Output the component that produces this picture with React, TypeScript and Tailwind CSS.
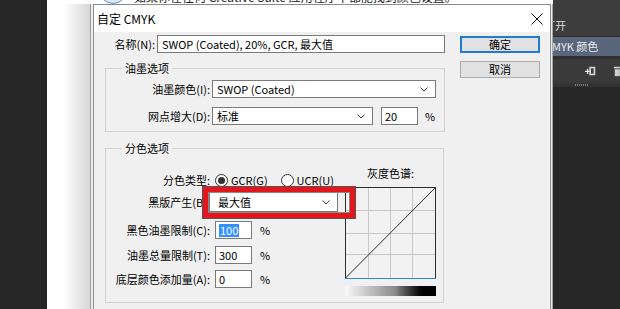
import React from "react";

function Chevron() {
  return (
    <svg width="8" height="5" viewBox="0 0 8 5" className="shrink-0">
      <polyline points="0.5,0.5 4,4 7.5,0.5" fill="none" stroke="#404040" strokeWidth="1" />
    </svg>
  );
}

function Select({ value, className }: { value: string; className: string }) {
  return (
    <div
      className={`flex items-center justify-between border border-[#7a7a7a] bg-white pl-[4px] pr-[7px] ${className}`}
    >
      <span className="leading-none">{value}</span>
      <Chevron />
    </div>
  );
}

function TextBox({ value, selected }: { value: string; selected?: boolean }) {
  return (
    <div className="flex h-[18px] w-[37px] items-center border border-[#7a7a7a] bg-white pl-[3px]">
      {selected ? (
        <span className="bg-[#3390ff] px-[1px] leading-[13px] text-white">{value}</span>
      ) : (
        <span className="leading-none">{value}</span>
      )}
    </div>
  );
}

function Radio({ checked, label }: { checked?: boolean; label: string }) {
  return (
    <div className="flex items-center gap-[3px]">
      <span className="flex h-[13px] w-[13px] items-center justify-center rounded-full border border-[#333] bg-white">
        {checked && <span className="h-[7px] w-[7px] rounded-full bg-[#333]" />}
      </span>
      <span className="leading-none">{label}</span>
    </div>
  );
}

function Label({ children }: { children: React.ReactNode }) {
  return <div className="w-[104px] shrink-0 text-right leading-none">{children}</div>;
}

function GrayChart() {
  return (
    <svg width="91" height="92" viewBox="0 0 91 92" className="block">
      <rect x="0" y="0" width="91" height="92" fill="#f2f2f2" />
      {[23.5, 45.5, 67.5].map((x) => (
        <line key={"v" + x} x1={x} y1="0" x2={x} y2="92" stroke="#c8c8c8" strokeWidth="1" />
      ))}
      {[23.5, 46.5, 67.5].map((y) => (
        <line key={"h" + y} x1="0" y1={y} x2="91" y2={y} stroke="#c8c8c8" strokeWidth="1" />
      ))}
      <line x1="0.5" y1="91" x2="90.5" y2="0.5" stroke="#2b2b2b" strokeWidth="1" />
      <polyline points="0.5,92 0.5,0.5 90.5,0.5 90.5,92" fill="none" stroke="#2b2b2b" strokeWidth="1" />
      <line x1="0" y1="91.5" x2="91" y2="91.5" stroke="#2a8ad4" strokeWidth="1" />
    </svg>
  );
}

export default function App() {
  return (
    <div className="flex h-[309px] w-[620px] overflow-hidden bg-[#262626] font-['Noto_Sans_CJK_SC','Noto_Sans',sans-serif] text-[11px] text-black">
      {/* dark workspace on the left */}
      <div className="w-[47px] shrink-0 bg-[#262626]" />

      {/* color settings dialog behind */}
      <div className="flex w-[506px] shrink-0 flex-col bg-white">
        <div className="h-[4px] overflow-hidden">
          <div className="-mt-[10px] flex h-[14px] items-end gap-[7px] pl-[52px]">
            <span className="h-[28px] w-[28px] shrink-0 rounded-full border border-[#6a8fc0] bg-[#d9e6f6]" />
            <span className="whitespace-nowrap text-[12px] leading-[14px] text-[#1a1a1a]">
              如果你在任何 Creative Suite 应用程序中都能找到颜色设置。
            </span>
          </div>
        </div>

        <div className="flex flex-1">
          <div className="w-[43px] shrink-0 bg-linear-to-r from-white from-40% to-[#d6d6d6]" />
          <div className="w-px shrink-0 bg-[#9c9c9c]" />
          <div className="w-[2px] shrink-0 bg-[#ececec]" />

          {/* 自定 CMYK dialog */}
          <div className="flex w-[458px] shrink-0 flex-col border-x border-t border-[#8c8c8c] bg-[#f0f0f0]">
            <div className="flex h-[27px] shrink-0 items-center justify-between bg-white pl-[3px] pr-[7px]">
              <span className="text-[12px] leading-none">自定 CMYK</span>
              <svg width="12" height="12" viewBox="0 0 12 12">
                <path d="M0.5 0.5 L11.5 11.5 M11.5 0.5 L0.5 11.5" stroke="#111" strokeWidth="1" />
              </svg>
            </div>

            <div className="relative flex flex-1 pl-[11px]">
              {/* form column */}
              <div className="flex w-[340px] shrink-0 flex-col">
                <div className="mt-[3px] flex items-center">
                  <div className="w-[50px] shrink-0 text-right leading-none">名称(N):</div>
                  <div className="ml-[2px] flex h-[18px] w-[288px] items-center border border-[#7a7a7a] bg-white pl-[4px]">
                    <span className="leading-none">SWOP (Coated), 20%, GCR, 最大值</span>
                  </div>
                </div>

                <fieldset className="mt-[7px] border border-[#d3d3d3]">
                  <legend className="ml-[16px] px-[3px] leading-[16px]">油墨选项</legend>
                  <div className="flex flex-col pb-[6px]">
                    <div className="mt-[4px] flex items-center">
                      <Label>油墨颜色(I):</Label>
                      <Select value="SWOP (Coated)" className="ml-[2px] h-[18px] w-[224px]" />
                    </div>
                    <div className="mt-[9px] flex items-center">
                      <Label>网点增大(D):</Label>
                      <Select value="标准" className="ml-[2px] h-[18px] w-[161px]" />
                      <div className="ml-[8px]">
                        <TextBox value="20" />
                      </div>
                      <span className="ml-[7px] leading-none">%</span>
                    </div>
                  </div>
                </fieldset>

                <fieldset className="mt-[8px] w-[339px] border border-[#d3d3d3]">
                  <legend className="ml-[16px] px-[3px] leading-[16px]">分色选项</legend>
                  <div className="flex items-start justify-between pb-[6px]">
                    <div className="flex flex-col">
                      <div className="mt-[16px] flex h-[16px] items-center">
                        <Label>分色类型:</Label>
                        <div className="ml-[5px] flex items-center gap-[13px]">
                          <Radio checked label="GCR(G)" />
                          <Radio label="UCR(U)" />
                        </div>
                      </div>
                      <div className="mt-[4px] flex items-center">
                        <Label>黑版产生(B):</Label>
                        <Select value="最大值" className="-ml-[1px] h-[20px] w-[129px] pl-[8px]" />
                      </div>
                      <div className="mt-[9px] flex items-center">
                        <Label>黑色油墨限制(C):</Label>
                        <div className="ml-[5px]">
                          <TextBox value="100" selected />
                        </div>
                        <span className="ml-[8px] leading-none">%</span>
                      </div>
                      <div className="mt-[7px] flex items-center">
                        <Label>油墨总量限制(T):</Label>
                        <div className="ml-[5px]">
                          <TextBox value="300" />
                        </div>
                        <span className="ml-[8px] leading-none">%</span>
                      </div>
                      <div className="mt-[6px] flex items-center">
                        <Label>底层颜色添加量(A):</Label>
                        <div className="ml-[5px]">
                          <TextBox value="0" />
                        </div>
                        <span className="ml-[8px] leading-none">%</span>
                      </div>
                    </div>

                    <div className="mr-[7px] flex w-[91px] flex-col items-center">
                      <div className="mt-[9px] leading-[16px]">灰度色谱:</div>
                      <div className="mt-[6px]">
                        <GrayChart />
                      </div>
                      <div className="mt-[7px] h-[10px] w-[91px] bg-linear-to-r from-[#fafafa] via-[#8a8a8a] via-55% to-black to-90%" />
                    </div>
                  </div>
                </fieldset>
              </div>

              {/* buttons */}
              <div className="ml-[15px] flex w-[80px] shrink-0 flex-col">
                <div className="mt-[4px] flex h-[17px] items-center justify-center border-2 border-[#1f7ad8] bg-[#e1e1e1] leading-none">
                  确定
                </div>
                <div className="mt-[8px] flex h-[17px] items-center justify-center border border-[#adadad] bg-[#e1e1e1] leading-none">
                  取消
                </div>
              </div>

              {/* red annotation frame */}
              <div className="absolute left-[109px] top-[155px] h-[31px] w-[152px] border-[5px] border-[#e5151c] ring-1 ring-[#555]">
                <div className="h-full w-full border border-[#8a8a8a]" />
              </div>
            </div>
          </div>

          <div className="w-px shrink-0 bg-[#ededed]" />
          <div className="w-px shrink-0 bg-[#a5a5a5]" />
        </div>
      </div>

      {/* photoshop panel on the right */}
      <div className="flex flex-1 flex-col overflow-hidden text-[11px]">
        <div className="h-[36px] bg-[#3d3d3d] pt-[17px]">
          <span className="-ml-[9px] whitespace-nowrap leading-none text-[#d8d8d8]">打开</span>
        </div>
        <div className="h-px bg-[#2b2b2b]" />
        <div className="flex h-[19px] items-center bg-[#5a667c]">
          <span className="-ml-[8px] whitespace-nowrap leading-none text-[#ececec]">CMYK 颜色</span>
        </div>
        <div className="h-[3px] bg-[#303030]" />
        <div className="flex h-[24px] items-center bg-[#3a3a3a] pl-[32px]">
          <svg width="13" height="12" viewBox="0 0 13 12">
            <rect x="5" y="1" width="7" height="10" fill="#cfcfcf" />
            <rect x="7" y="3" width="3" height="6" fill="#3a3a3a" />
            <path d="M0 6.5 H6 M3 3.5 V9.5" stroke="#e8e8e8" strokeWidth="1.5" />
          </svg>
          <svg width="8" height="12" viewBox="0 0 8 12" className="ml-[17px]">
            <rect x="1" y="1" width="7" height="2" fill="#cfcfcf" />
            <rect x="2" y="4" width="6" height="8" fill="#cfcfcf" />
          </svg>
        </div>
        <div className="flex h-[4px] items-center bg-[#333] pl-[22px]">
          <div className="h-[2px] w-[14px] bg-[repeating-linear-gradient(90deg,#777_0_1px,transparent_1px_2px)]" />
        </div>
        <div className="flex-1 bg-[#272727]" />
      </div>
    </div>
  );
}
